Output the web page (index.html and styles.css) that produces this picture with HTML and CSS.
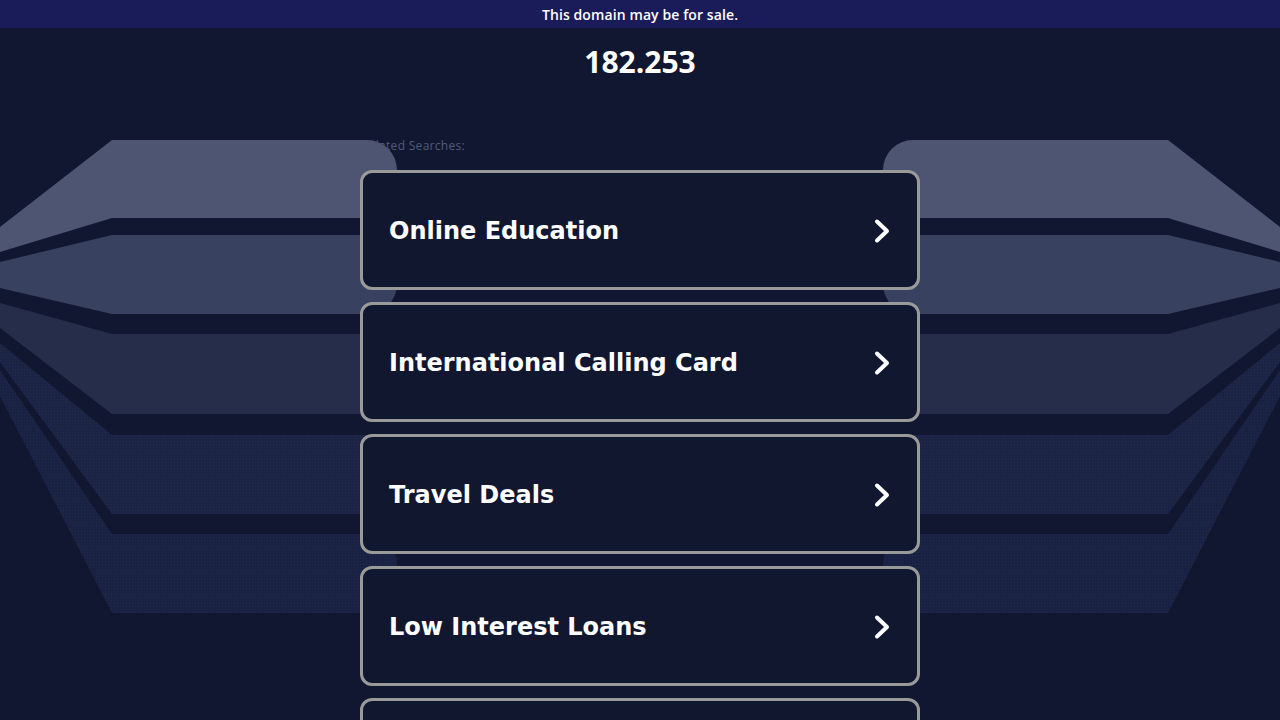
FILE: index.html
```html
<!DOCTYPE html>
<html lang="en">
<head>
<meta charset="utf-8">
<title>182.253</title>
<link rel="stylesheet" href="styles.css">
</head>
<body>
<div class="topbar">This domain may be for sale.</div>
<svg class="bg-art" width="1280" height="720" viewBox="0 0 1280 720" aria-hidden="true">
  <defs>
    <pattern id="dots4" width="3" height="3" patternUnits="userSpaceOnUse">
      <rect width="3" height="3" fill="#1c2445"/>
      <rect width="1" height="1" fill="#232c50"/>
    </pattern>
    <pattern id="dots5" width="3" height="3" patternUnits="userSpaceOnUse">
      <rect width="3" height="3" fill="#1a2243"/>
      <rect width="1" height="1" fill="#212a4e"/>
    </pattern>
  </defs>
  <g>
    <path fill="#4d5572" d="M0,227 L112,140 L367,140 A30,30 0 0 1 397,170 L397,188 A30,30 0 0 1 367,218 L112,218 L0,252 Z"/>
    <path fill="#394160" d="M0,262 L112,235 L367,235 A30,30 0 0 1 397,265 L397,284 A30,30 0 0 1 367,314 L112,314 L0,288 Z"/>
    <path fill="#252d4b" d="M0,303 L112,334 L367,334 A30,30 0 0 1 397,364 L397,384 A30,30 0 0 1 367,414 L112,414 L0,328 Z"/>
    <path fill="url(#dots4)" d="M0,343 L112,435 L367,435 A30,30 0 0 1 397,465 L397,484 A30,30 0 0 1 367,514 L112,514 L0,362 Z"/>
    <path fill="url(#dots5)" d="M0,370 L112,534 L367,534 A30,30 0 0 1 397,564 L397,583 A30,30 0 0 1 367,613 L112,613 L0,396 Z"/>

    <path fill="#4d5572" d="M1280,227 L1168,140 L913,140 A30,30 0 0 0 883,170 L883,188 A30,30 0 0 0 913,218 L1168,218 L1280,252 Z"/>
    <path fill="#394160" d="M1280,262 L1168,235 L913,235 A30,30 0 0 0 883,265 L883,284 A30,30 0 0 0 913,314 L1168,314 L1280,288 Z"/>
    <path fill="#252d4b" d="M1280,303 L1168,334 L913,334 A30,30 0 0 0 883,364 L883,384 A30,30 0 0 0 913,414 L1168,414 L1280,328 Z"/>
    <path fill="url(#dots4)" d="M1280,343 L1168,435 L913,435 A30,30 0 0 0 883,465 L883,484 A30,30 0 0 0 913,514 L1168,514 L1280,362 Z"/>
    <path fill="url(#dots5)" d="M1280,370 L1168,534 L913,534 A30,30 0 0 0 883,564 L883,583 A30,30 0 0 0 913,613 L1168,613 L1280,396 Z"/>
  </g>
</svg>
<h1 class="title">182.253</h1>
<main class="content">
  <div class="label">Related Searches:</div>
  <ul class="links">
    <li><a class="card" href="#"><span class="card-text">Online Education</span><svg class="chev" width="20" height="28" viewBox="0 0 20 28"><polyline points="5,4.5 15,14 5,23.5"/></svg></a></li>
    <li><a class="card" href="#"><span class="card-text">International Calling Card</span><svg class="chev" width="20" height="28" viewBox="0 0 20 28"><polyline points="5,4.5 15,14 5,23.5"/></svg></a></li>
    <li><a class="card" href="#"><span class="card-text">Travel Deals</span><svg class="chev" width="20" height="28" viewBox="0 0 20 28"><polyline points="5,4.5 15,14 5,23.5"/></svg></a></li>
    <li><a class="card" href="#"><span class="card-text">Low Interest Loans</span><svg class="chev" width="20" height="28" viewBox="0 0 20 28"><polyline points="5,4.5 15,14 5,23.5"/></svg></a></li>
    <li><a class="card card-last" href="#"><svg class="chev" width="20" height="28" viewBox="0 0 20 28"><polyline points="5,4.5 15,14 5,23.5"/></svg></a></li>
  </ul>
</main>
</body>
</html>
```
FILE: styles.css
```css
html, body {
  margin: 0;
  padding: 0;
}
body {
  background: #111730;
  color: #ffffff;
  font-family: "Open Sans", "Liberation Sans", sans-serif;
  position: relative;
  min-height: 720px;
}
.topbar {
  height: 28px;
  background: #191c58;
  display: flex;
  align-items: center;
  justify-content: center;
  font-size: 14px;
  font-weight: 600;
  letter-spacing: 0.1px;
  color: #ffffff;
}
.bg-art {
  position: absolute;
  top: 0;
  left: 0;
  z-index: 0;
  pointer-events: none;
}
.title {
  margin: 14px 0 0;
  font-size: 30px;
  line-height: 40px;
  font-weight: 700;
  text-align: center;
}
.content {
  width: 560px;
  margin: 0 auto;
  padding-top: 57px;
}
.label {
  font-size: 12px;
  line-height: 14px;
  letter-spacing: 0.3px;
  color: #545b7a;
  padding-left: 1px;
  margin-bottom: 17px;
}
.links {
  list-style: none;
  margin: 0;
  padding: 0;
  display: flex;
  flex-direction: column;
  gap: 12px;
}
.card {
  position: relative;
  z-index: 1;
  box-sizing: border-box;
  height: 120px;
  display: flex;
  align-items: center;
  justify-content: space-between;
  padding: 1px 25px 0 26px;
  border: 3px solid #9a9a9a;
  border-radius: 12px;
  background: #121730;
  color: #ffffff;
  text-decoration: none;
}
.card-last {
  justify-content: flex-end;
}
.card-text {
  font-family: "DejaVu Sans", "Verdana", sans-serif;
  font-weight: 700;
  font-size: 24px;
  line-height: 30px;
}
.chev {
  display: block;
}
.chev polyline {
  fill: none;
  stroke: #ffffff;
  stroke-width: 4;
  stroke-linecap: round;
  stroke-linejoin: round;
}
```
